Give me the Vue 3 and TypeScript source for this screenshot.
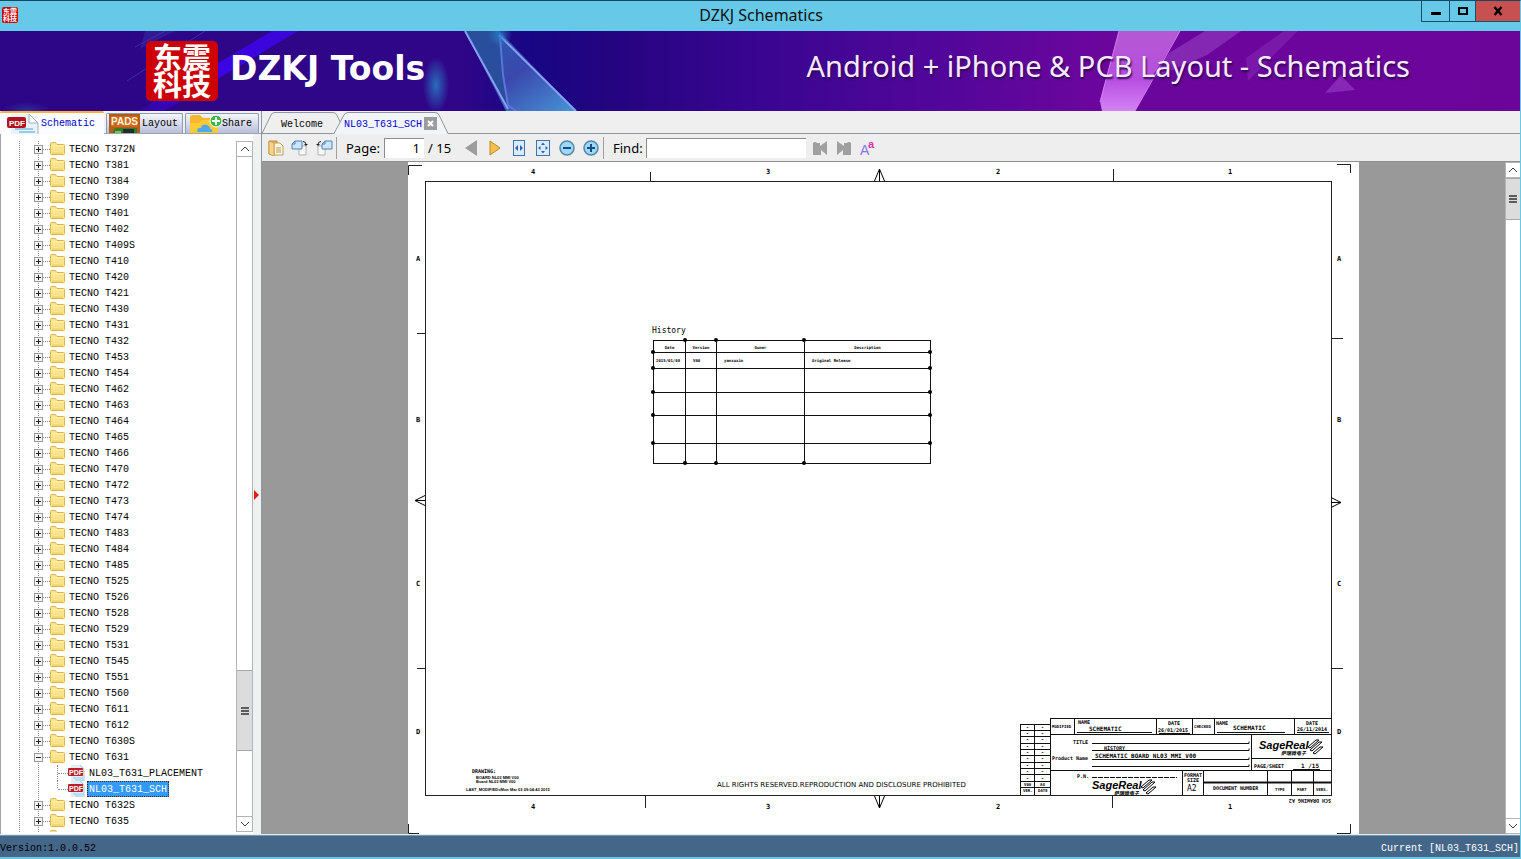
<script setup lang="ts">
import { ref } from 'vue'

const models: string[] = [
  'T372N', 'T381', 'T384', 'T390', 'T401', 'T402', 'T409S', 'T410', 'T420', 'T421', 'T430', 'T431', 'T432',
  'T453', 'T454', 'T462', 'T463', 'T464', 'T465', 'T466', 'T470', 'T472', 'T473', 'T474', 'T483', 'T484',
  'T485', 'T525', 'T526', 'T528', 'T529', 'T531', 'T545', 'T551', 'T560', 'T611', 'T612', 'T630S', 'T631',
  'T632S', 'T635',
]
const files: string[] = ['NL03_T631_PLACEMENT', 'NL03_T631_SCH']
const openModel = 'T631'
const selected = ref('NL03_T631_SCH')
const page = ref('1')
const find = ref('')

const columnMarks = [
  { t: '4', x: 123 }, { t: '3', x: 358 }, { t: '2', x: 588 }, { t: '1', x: 820 },
]
const rowMarks = [
  { t: 'A', y: 99 }, { t: 'B', y: 260 }, { t: 'C', y: 424 }, { t: 'D', y: 572 },
]
const revisionRows = [565, 571, 577, 584, 590, 596, 603, 609, 616]
const historyCols = [277, 308, 396]
const historyRows = [190, 206, 230, 253, 281]

interface Label { t: string; x: number; y: number; c: string }
const labels: Label[] = [
  { t: 'MODIFIED', x: 644, y: 566, c: 't4' },
  { t: 'NAME', x: 670, y: 562, c: 't5' },
  { t: 'SCHEMATIC', x: 681, y: 569, c: 't6' },
  { t: 'DATE', x: 760, y: 563, c: 't5' },
  { t: '26/01/2015', x: 750, y: 570, c: 't5' },
  { t: 'CHECKED', x: 786, y: 566, c: 't4' },
  { t: 'NAME', x: 808, y: 563, c: 't5' },
  { t: 'SCHEMATIC', x: 825, y: 568, c: 't6' },
  { t: 'DATE', x: 898, y: 563, c: 't5' },
  { t: '26/11/2014', x: 889, y: 569, c: 't5' },
  { t: 'TITLE', x: 665, y: 582, c: 't5' },
  { t: 'HISTORY', x: 696, y: 588, c: 't5' },
  { t: 'Product Name', x: 644, y: 598, c: 't5' },
  { t: 'SCHEMATIC BOARD NL03_MMI_V00', x: 687, y: 596, c: 't6' },
  { t: 'P.N.', x: 669, y: 616, c: 't5' },
  { t: 'FORMAT', x: 776, y: 615, c: 't5' },
  { t: 'SIZE', x: 779, y: 620, c: 't5' },
  { t: 'A2', x: 779, y: 629, c: 't8' },
  { t: 'DOCUMENT NUMBER', x: 805, y: 628, c: 't5' },
  { t: 'TYPE', x: 867, y: 629, c: 't4' },
  { t: 'PART', x: 889, y: 629, c: 't4' },
  { t: 'VERS.', x: 908, y: 629, c: 't4' },
  { t: 'PAGE/SHEET', x: 846, y: 606, c: 't5' },
  { t: '1 /15', x: 893, y: 606, c: 't6' },
  { t: 'V00', x: 616, y: 624, c: 't4' },
  { t: 'A4', x: 632, y: 624, c: 't4' },
  { t: 'VER.', x: 615, y: 630, c: 't4' },
  { t: 'DATE', x: 630, y: 630, c: 't4' },
]
</script>

<template>
  <div class="window">
    <header class="titlebar">
      <span class="seal small" aria-hidden="true"><span>东震科技</span></span>
      <h1>DZKJ Schematics</h1>
      <div class="winbtns">
        <button class="min" aria-label="Minimize"><svg width="12" height="12"><rect x="1" y="7" width="10" height="3" /></svg></button>
        <button class="max" aria-label="Maximize"><svg width="12" height="12"><rect x="2" y="3" width="8" height="6" fill="none" stroke="#000" stroke-width="2" /></svg></button>
        <button class="close" aria-label="Close"><svg width="12" height="12"><path d="M2.500 2l7 8M9.500 2l-7 8" stroke="#000" stroke-width="2.400" /></svg></button>
      </div>
    </header>

    <section class="banner">
      <svg class="art" viewBox="0 0 1520 80" preserveAspectRatio="none" aria-hidden="true">
        <defs>
          <linearGradient id="bg" x1="0" x2="1" y1="0" y2="0">
            <stop offset="0" stop-color="#2c0687" /><stop offset=".3" stop-color="#300688" />
            <stop offset=".35" stop-color="#170683" /><stop offset=".4" stop-color="#24047f" />
            <stop offset=".5" stop-color="#390591" /><stop offset=".62" stop-color="#52069a" />
            <stop offset=".72" stop-color="#6b069d" /><stop offset="1" stop-color="#6b059a" />
          </linearGradient>
          <linearGradient id="streak" x1="1" x2="0" y1="0" y2="1">
            <stop offset="0" stop-color="#3c05d8" /><stop offset=".6" stop-color="#3a04e8" /><stop offset="1" stop-color="#3206a0" />
          </linearGradient>
          <linearGradient id="shard" x1="0" x2="1" y1="0" y2="1">
            <stop offset="0" stop-color="#2c62b8" /><stop offset=".5" stop-color="#3a48ac" /><stop offset="1" stop-color="#4794d8" />
          </linearGradient>
          <linearGradient id="pink" x1="0" x2="0" y1="0" y2="1">
            <stop offset="0" stop-color="#b35ad2" /><stop offset=".6" stop-color="#b74de0" /><stop offset="1" stop-color="#d283f4" />
          </linearGradient>
          <radialGradient id="glow"><stop offset="0" stop-color="#287fc4" stop-opacity=".85" /><stop offset="1" stop-color="#287fc4" stop-opacity="0" /></radialGradient>
        </defs>
        <rect width="1520" height="80" fill="url(#bg)" />
        <path d="M272 0h26l-84 50-50 30h-26z" fill="url(#streak)" />
        <path d="M205 0l-78 50M165 0l-30 16" stroke="#554cc0" stroke-opacity=".5" />
        <path d="M145 0h30l-35 18z" fill="#3b36a4" opacity=".4" />
        <ellipse cx="436" cy="54" rx="13" ry="28" fill="url(#glow)" />
        <ellipse cx="26" cy="80" rx="24" ry="9" fill="url(#glow)" opacity=".4" />
        <path d="M465 0h34l77 80h-70z" fill="url(#shard)" />
        <path d="M465 0h34l3 30 5 45z" fill="#284e9c" />
        <path d="M465 0l43 78M499 4l77 76" stroke="#87a0f2" stroke-width="2" fill="none" />
        <path d="M500 6l3 38 5 30 8 6" stroke="#5d74dc" stroke-width="2" fill="none" />
        <circle cx="500" cy="4" r="12" fill="url(#glow)" />
        <path d="M1119 0h61l-14 24-31 56h-33l-2-10z" fill="url(#pink)" />
        <path d="M1169 22l36-22h36l-34 24-58 25z" fill="#8428b4" />
        <path d="M1248 50L1298 0h-14l-38 27z" fill="#8528b4" opacity=".55" />
        <path d="M1325 62l16-18 14 15z" fill="#8627b5" />
        <path d="M1119 0l-19 71M1180 0l-45 80" stroke="#d27af0" fill="none" />
      </svg>
      <span class="seal large"><span>东震科技</span></span>
      <strong class="brand">DZKJ Tools</strong>
      <span class="tagline">Android + iPhone &amp; PCB Layout - Schematics</span>
    </section>

    <main class="body">
      <aside class="side">
        <nav class="sidetabs">
          <button class="stab on">
            <svg width="32" height="20" viewBox="0 0 32 20">
              <path d="M4 0h19l8 8v12H4z" fill="#e8f2f8" /><path d="M22 0l9 9v11" fill="none" stroke="#9cb4c4" />
              <path d="M22 0l9 9h-9z" fill="#fff" stroke="#9cb4c4" /><path d="M8 14h18v2H8zM12 17h16v2H12z" fill="#9ccbe6" />
              <rect y="3" width="19" height="11" rx="2" fill="#b3121d" />
              <text x="2" y="12" fill="#fff" class="pdf">PDF</text>
            </svg>Schematic</button>
          <button class="stab">
            <svg width="31" height="20" viewBox="0 0 31 20">
              <rect width="31" height="20" fill="#b75d13" /><rect x="2" y="2" width="27" height="11" fill="#c9691e" />
              <path d="M3 20l3-6h22v6z" fill="#347a27" /><path d="M14 15h11v5H14z" fill="#242c2b" /><path d="M6 17h6v2H6z" fill="#7fc14b" />
              <text x="2" y="11" fill="#fff4d8" class="pads">PADS</text>
            </svg>Layout</button>
          <button class="stab">
            <svg width="32" height="20" viewBox="0 0 32 20">
              <path d="M0 4q0-3 3-3h7l3 3h12q3 0 3 3v13H0z" fill="#f6b62d" /><path d="M0 20V9h9l3-3h16v14z" fill="#ffca38" />
              <path d="M7 17q1-4 4-3 1-5 6-3 3 1 3 4 3 0 2 3H8z" fill="#4da9ec" />
              <circle cx="26" cy="7" r="6" fill="#42b649" stroke="#fff" /><path d="M26 3v8M22 7h8" stroke="#fff" stroke-width="2" />
            </svg>Share</button>
        </nav>
        <div class="treewrap">
          <div class="tree">
            <ul>
              <li v-for="m in models" :key="m">
                <div class="row">
                  <button class="exp" :aria-label="(m === openModel ? 'Collapse ' : 'Expand ') + m">
                    <svg width="9" height="9"><rect x=".5" y=".5" width="8" height="8" fill="#f4f4f4" stroke="#989898" /><path :d="m === openModel ? 'M2 4.5h5' : 'M2 4.5h5M4.5 2v5'" stroke="#202020" /></svg>
                  </button>
                  <i class="dots"></i>
                  <svg class="folder" width="15" height="13" viewBox="0 0 15 13"><path d="M.5 1.500q0-1 1-1h4l1.500 2h6.500q1 0 1 1v8q0 1-1 1h-12q-1 0-1-1z" fill="#fbe38a" stroke="#dfb54b" /><path d="M1 4h13" stroke="#fff4bd" /><path d="M2 11h11" stroke="#f2cc5c" /></svg>
                  <span class="name">TECNO {{ m }}</span>
                </div>
                <ul v-if="m === openModel" class="kids">
                  <li v-for="f in files" :key="f" class="row">
                    <i class="dots"></i>
                    <svg class="doc" width="17" height="16" viewBox="0 0 17 16"><path d="M3 0h10l3 3v13H3z" fill="#dceef8" /><path d="M12 0l4 4v12" fill="none" stroke="#a8c8dc" /><path d="M5 13h10M7 15h8" stroke="#9fcbe6" /><rect y="3" width="15" height="8" rx="1" fill="#bb1f2a" /><text x="1" y="10" fill="#fff" class="pdfs">PDF</text></svg>
                    <button class="file" :class="{ sel: f === selected }" @click="selected = f">{{ f }}</button>
                  </li>
                </ul>
              </li>
              <li aria-hidden="true">
                <div class="row stub">
                  <svg class="folder" width="15" height="13" viewBox="0 0 15 13"><path d="M.5 1.500q0-1 1-1h4l1.500 2h6.500q1 0 1 1v8q0 1-1 1h-12q-1 0-1-1z" fill="#fbe38a" stroke="#dfb54b" /></svg>
                </div>
              </li>
            </ul>
          </div>
          <div class="vscroll">
            <button aria-label="Scroll up"><svg width="10" height="6"><path d="M1 5l4-4 4 4" fill="none" stroke="#404040" /></svg></button>
            <div class="gap-a"></div>
            <div class="thumb"><i></i><i></i><i></i></div>
            <div class="gap-b"></div>
            <button aria-label="Scroll down"><svg width="10" height="6"><path d="M1 1l4 4 4-4" fill="none" stroke="#404040" /></svg></button>
          </div>
          <div class="splitter"><svg width="6" height="10"><path d="M0 0l5 5-5 5z" fill="#e02018" /></svg></div>
        </div>
      </aside>

      <section class="docs">
        <nav class="doctabs">
          <svg class="tabshape" width="190" height="23" aria-hidden="true">
            <path d="M0 22.500L9 4q1-2.500 4-2.500h58q3 0 4 3l4 8" fill="none" stroke="#8b98a4" />
            <path d="M72 23L82 4q1-2.500 4-2.500h87q3 0 4 2.500l9 19z" fill="#f2f4f6" />
            <path d="M72 22.500L82 4q1-2.500 4-2.500h87q3 0 4 2.500l9 18.500" fill="none" stroke="#8b98a4" />
          </svg>
          <button class="dtab">Welcome</button>
          <button class="dtab cur">NL03_T631_SCH</button>
          <button class="x" aria-label="Close tab"><svg width="13" height="13"><rect width="13" height="13" fill="#9c9c9c" /><path d="M4 4l5 5M9 4l-5 5" stroke="#fff" stroke-width="2" /></svg></button>
        </nav>
        <div class="toolbar">
          <button aria-label="Open"><svg width="16" height="16"><path d="M1 1h8v13H1z" fill="#e9bb5c" stroke="#c08d2e" /><path d="M6 3h6l3 3v9H6z" fill="#fff7dd" stroke="#b9a069" /><path d="M8 8h5M8 10h5M8 12h5" stroke="#b89a58" /><path d="M1 1l5 2v13l-5-2z" fill="#f6d48b" stroke="#d0a14a" /></svg></button>
          <button aria-label="Rotate right"><svg width="18" height="16"><path d="M8 6h7v9H8z" fill="#fafafa" stroke="#b0b0b0" /><path d="M4 1h7v8H1V4z" fill="#cfe6fa" stroke="#4b82b8" /><path d="M1 4h3V1" fill="none" stroke="#4b82b8" /><path d="M12 1.500q3 0 3 3" fill="none" stroke="#222" /><path d="M13 4h4l-2 2z" fill="#222" /></svg></button>
          <button aria-label="Rotate left"><svg width="18" height="16"><path d="M3 6h7v9H3z" fill="#fafafa" stroke="#b0b0b0" /><path d="M10 1h7v8H7V4z" fill="#cfe6fa" stroke="#4b82b8" /><path d="M7 4h3V1" fill="none" stroke="#4b82b8" /><path d="M6 1.500q-3 0-3 3" fill="none" stroke="#222" /><path d="M1 4h4L3 6z" fill="#222" /></svg></button>
          <i class="sep"></i>
          <label class="plabel" for="page">Page:</label>
          <input id="page" v-model="page" class="pagebox" type="text" />
          <span class="total">/ 15</span>
          <button aria-label="Previous page"><svg width="14" height="16"><path d="M13 0v16L1 8z" fill="#9d9d9d" /></svg></button>
          <button aria-label="Next page"><svg width="12" height="16"><path d="M1 1v14l10-7z" fill="#f4c14e" stroke="#b98a22" /></svg></button>
          <button aria-label="Fit width"><svg width="12" height="16"><rect x=".5" y=".5" width="11" height="15" fill="#dcebfb" stroke="#3f74b0" /><path d="M5 5v6L2 8zM7 5v6l3-3z" fill="#2a66b0" /></svg></button>
          <button aria-label="Fit page"><svg width="14" height="16"><rect x=".5" y=".5" width="13" height="15" fill="#dcebfb" stroke="#3f74b0" /><path d="M5 5h4L7 2.500zM5 11h4l-2 2.500zM4.500 6v4L2 8zM9.500 6v4L12 8z" fill="#2a66b0" /></svg></button>
          <button aria-label="Zoom out"><svg width="16" height="16"><circle cx="8" cy="8" r="7" fill="#9bd8fa" stroke="#5786a6" stroke-width="1.500" /><path d="M4 8h8" stroke="#164b84" stroke-width="2" /></svg></button>
          <button aria-label="Zoom in"><svg width="16" height="16"><circle cx="8" cy="8" r="7" fill="#9bd8fa" stroke="#5786a6" stroke-width="1.500" /><path d="M4 8h8M8 4v8" stroke="#164b84" stroke-width="2" /></svg></button>
          <i class="sep"></i>
          <label class="flabel" for="find">Find:</label>
          <input id="find" v-model="find" class="findbox" type="text" />
          <button aria-label="Find previous"><svg width="16" height="16"><path d="M1 3q2-2 4 0h3v3l7-5v14l-6-5v5H1z" fill="#a0a0a0" /></svg></button>
          <button aria-label="Find next"><svg width="16" height="16"><path d="M15 3q-2-2-4 0H8v3L1 1v14l6-5v5h8z" fill="#a0a0a0" /></svg></button>
          <button aria-label="Match case"><svg width="16" height="22"><text x="0" y="18" fill="#8a74ea" class="bigA">A</text><text x="8" y="11" fill="#d633a8" class="smallA">a</text></svg></button>
        </div>
        <div class="viewer">
          <div class="canvas">
            <svg class="sheet" viewBox="0 0 951 672">
              <rect width="951" height="672" fill="#fff" />
              <g fill="none" stroke="#222">
                <rect x="17.500" y="19.500" width="906" height="614" />
                <path d="M.5 13V3.500H14M929 2.500h13.500V11M.5 662v9.500H11M929 671.500h13.500V662" />
                <path d="M242.500 10v9M705.500 7v12M237.500 634v12M704.500 634v12M9 171.500h8M9 506.500h8M924 176.500h11M924 506.500h11" />
                <path d="M471.500 7v12M471.500 7l-5 12M471.500 7l5 12M471.500 646v-12M471.500 646l-5-12M471.500 646l5-12M7 338.500h10M7 338.500l10-5M7 338.500l10 5M933 340.500h-10M933 340.500l-10-5M933 340.500l-10 5" stroke="#000" />
              </g>
              <g class="mark">
                <template v-for="c in columnMarks" :key="c.t">
                  <text :x="c.x" y="12">{{ c.t }}</text><text :x="c.x" y="647">{{ c.t }}</text>
                </template>
                <template v-for="r in rowMarks" :key="r.t">
                  <text x="8" :y="r.y">{{ r.t }}</text><text x="929" :y="r.y">{{ r.t }}</text>
                </template>
              </g>

              <text x="244" y="171" class="t8">History</text>
              <foreignObject x="245" y="178" width="279" height="125">
                <table class="history">
                  <colgroup><col class="c1" /><col class="c2" /><col class="c3" /><col /></colgroup>
                  <thead><tr class="h12"><th>Date</th><th>Version</th><th>Owner</th><th>Description</th></tr></thead>
                  <tbody>
                    <tr class="h16"><td>2015/01/08</td><td class="in">V00</td><td class="in">yanxuxin</td><td class="in">Original Release</td></tr>
                    <tr class="h24"><td></td><td></td><td></td><td></td></tr>
                    <tr class="h23"><td></td><td></td><td></td><td></td></tr>
                    <tr class="h28"><td></td><td></td><td></td><td></td></tr>
                    <tr class="h20"><td></td><td></td><td></td><td></td></tr>
                  </tbody>
                </table>
              </foreignObject>
              <g>
                <template v-for="x in historyCols" :key="x"><circle :cx="x" cy="178" r="2" /><circle :cx="x" cy="301" r="2" /></template>
                <template v-for="y in historyRows" :key="y"><circle cx="245" :cy="y" r="2" /><circle cx="522" :cy="y" r="2" /></template>
              </g>

              <text x="64" y="611" class="t5">DRAWING:</text>
              <text x="68" y="617" class="s4">BOARD NL03 MMI V00</text>
              <text x="68" y="621" class="s4">Board NL03 MMI V00</text>
              <text x="58" y="629" class="s4">LAST_MODIFIED=Mon Mar 03 09:04:43 2015</text>
              <text x="309" y="625" class="rights">ALL RIGHTS RESERVED.REPRODUCTION AND DISCLOSURE PROHIBITED</text>

              <g fill="none" stroke="#111">
                <path d="M612.500 562.500h30M612.500 568.500h30M612.500 574.500h30M612.500 581.500h30M612.500 587.500h30M612.500 593.500h30M612.500 600.500h30M612.500 606.500h30M612.500 612.500h30M612.500 619.500h30M612.500 625.500h30" />
                <path d="M612.500 562v71M626.500 562v71M642.500 556v77M642.500 556.500h281M642.500 572.500h281M642.500 608.500h281" />
                <path d="M666.500 556v16M748.500 556v16M784.500 556v16M806.500 556v16M886.500 556v16M843.500 572v36M843.500 596.500h80" />
                <path d="M774.500 608v25M795.500 608v25M859.500 608v25M883.500 608v25M905.500 608v25" />
                <path d="M669 570.500h75M751 571.500h31M809 570.500h68M889 570.500h32M684 581.500h157v-2M684 588.500h157v-2M684 597.500h157v-2M684 604.500h157v-2M885 607.500h27" />
                <path d="M684 615.500h85" stroke-dasharray="5 1" />
                <path d="M795 620.500h128" stroke-width="2" />
              </g>
              <text v-for="(l, i) in labels" :key="i" :x="l.x" :y="l.y" :class="l.c">{{ l.t }}</text>
              <template v-for="y in revisionRows" :key="y"><text x="618" :y="y + 2" class="t5">-</text><text x="633" :y="y + 2" class="t5">-</text></template>
              <text x="923" y="637" class="t5" transform="rotate(180 923 637)">SCH DRAWING A2</text>
              <g v-for="(p, i) in [{ x: 851, y: 577 }, { x: 684, y: 617 }]" :key="'logo' + i" :transform="`translate(${p.x} ${p.y})`">
                <text x="0" y="10" class="sage">SageReal</text>
                <text x="22" y="16" class="sub">萨瑞微电子</text>
                <path d="M49 8l8-7h3l-9 8zM51 11l9-8h3L53 12zM54 14l7-6h3l-8 7z" fill="#fff" stroke="#000" />
              </g>
            </svg>
          </div>
          <div class="vscroll wide">
            <button aria-label="Page up"><svg width="10" height="6"><path d="M1 5l4-4 4 4" fill="none" stroke="#404040" /></svg></button>
            <div class="thumb"><i></i><i></i><i></i></div>
            <div class="gap-b"></div>
            <button aria-label="Page down"><svg width="10" height="6"><path d="M1 1l4 4 4-4" fill="none" stroke="#404040" /></svg></button>
          </div>
        </div>
      </section>
    </main>

    <footer class="status"><span>Version:1.0.0.52</span><span>Current [NL03_T631_SCH]</span></footer>
  </div>
</template>

<style>
body { margin: 0; }
</style>

<style scoped>
* { box-sizing: border-box; }
button { padding: 0; border: 0; background: none; font: inherit; color: inherit; display: flex; align-items: center; justify-content: center; }
svg { display: block; flex: none; }
ul { list-style: none; margin: 0; padding: 0; }
.window { height: 100vh; display: flex; flex-direction: column; background: #efefef; border-top: 1px solid #174760; border-right: 1px solid #66c9e8; border-bottom: 2px solid #6cc5e2; font: 10px/16px "Liberation Mono", monospace; color: #000; overflow: hidden; }
.titlebar { height: 30px; flex: none; background: #66c9e8; display: grid; grid-template-columns: 1fr auto 1fr; align-items: center; padding: 0 0 2px 2px; }
h1 { margin: 0; font: 400 16px/20px "Noto Sans", sans-serif; color: #111; }
.seal { display: flex; align-items: center; justify-content: center; background: #cc0005; color: #fff; font-family: "Noto Sans CJK SC", sans-serif; font-weight: 700; }
.seal span { width: 2em; word-break: break-all; }
.seal.small { width: 16px; height: 16px; border-radius: 2px; font-size: 7px; line-height: 7px; }
.seal.large { width: 72px; height: 60px; border-radius: 5px; font-size: 29px; line-height: 27px; margin-left: 146px; padding-bottom: 2px; position: relative; }
.winbtns { display: flex; justify-self: end; align-self: start; height: 21px; }
.winbtns button { border: 1px solid #17506b; border-top: 0; border-right: 0; }
.min { width: 28px; }
.max { width: 26px; }
.winbtns .close { width: 45px; background: #c75050; }
.banner { position: relative; height: 80px; flex: none; display: flex; align-items: center; color: #fff; }
.art { position: absolute; inset: 0; width: 100%; height: 100%; }
.brand { position: relative; margin-left: 12px; padding-bottom: 4px; font: 700 33px/40px "DejaVu Sans", sans-serif; white-space: nowrap; }
.tagline { position: relative; margin-left: auto; margin-right: 110px; padding-bottom: 10px; font: 400 29px/36px "Noto Sans", sans-serif; color: #f6eaff; text-shadow: 1px 2px 2px #300550; white-space: nowrap; }
.body { flex: 1; min-height: 0; display: flex; border-bottom: 1px solid #dfeaf4; }
.side { width: 262px; flex: none; display: flex; flex-direction: column; border-right: 1px solid #fff; }
.sidetabs { display: flex; align-items: flex-end; gap: 2px; height: 23px; flex: none; background: #f0f1f4; border-bottom: 1px solid #9ba4b0; }
.stab { height: 20px; width: 77px; gap: 2px; border: 1px solid #8d9bb0; border-bottom: 0; border-radius: 2px 2px 0 0; background: linear-gradient(#f5f6fb, #b9bfda); overflow: hidden; justify-content: flex-start; padding: 1px 0 0 2px; }
.stab:last-child { width: 74px; padding-left: 4px; gap: 0; }
.stab.on { width: 104px; height: 23px; margin-bottom: -1px; padding: 1px 0 0 7px; border: 0; border-top: 2px solid #ffb13b; background: #fbfcff; color: #0000c8; }
.treewrap { flex: 1; min-height: 0; display: flex; padding: 7px 0 2px; background: #fff; border-left: 1px solid #9ba4b0; }
.tree { flex: 1; overflow: hidden; background: #fff; margin-left: 18px; border-left: 1px dotted #909090; }
.row { height: 16px; display: flex; align-items: center; white-space: nowrap; }
.name { padding-top: 2px; }
.stub { height: 4px; align-items: flex-start; padding: 1px 0 0 16px; overflow: hidden; }
.tree > ul { padding-left: 14px; }
.tree > ul > li { background: repeating-linear-gradient(#909090 0 1px, transparent 1px 2px) 4px 0 / 1px 100% no-repeat; }
.exp { width: 9px; height: 9px; margin-top: 1px; }
.dots { width: 7px; margin-top: 1px; border-top: 1px dotted #909090; }
.folder { margin: 0 4px 1px 0; }
.kids { margin-left: 23px; }
.kids .row { border-left: 1px dotted #909090; }
.kids .row:last-child { border-left-color: transparent; background: repeating-linear-gradient(#909090 0 1px, transparent 1px 2px) -1px 0 / 1px 8px no-repeat; }
.kids .dots { width: 10px; }
.doc { margin-right: 2px; }
.file { height: 16px; padding: 1px 1px 0; border: 1px solid transparent; }
.file.sel { background: #3399ff; color: #fff; border: 1px dotted #3a2a10; }
.vscroll { width: 17px; flex: none; display: flex; flex-direction: column; background: #fff; border: 1px solid #b4b4b4; border-width: 0 1px; }
.vscroll button { height: 16px; flex: none; border: 1px solid #b4b4b4; border-width: 1px 0; }
.thumb { height: 81px; flex: none; display: flex; flex-direction: column; align-items: center; justify-content: center; gap: 1px; background: #dcdcdc; border: 1px solid #a8a8a8; border-width: 1px 0; }
.thumb i { width: 8px; height: 2px; background: #5c5c5c; }
.gap-a { flex: 514; }
.gap-b { flex: 65; }
.splitter { width: 8px; flex: none; margin: -7px 0 -2px; padding: 22px 0 0 1px; background: #f0f1f2; display: flex; align-items: center; }
.docs { flex: 1; min-width: 0; display: flex; flex-direction: column; border-left: 1px solid #8b98a4; margin-left: -1px; }
.doctabs { position: relative; height: 23px; flex: none; display: flex; align-items: center; border-bottom: 1px solid #8b98a4; }
.tabshape { position: absolute; left: 0; top: 0; }
.dtab { position: relative; height: 22px; margin-left: 19px; padding-top: 5px; }
.dtab.cur { color: #0000d8; margin-left: 21px; }
.x { position: relative; margin: 3px 0 0 2px; }
.toolbar { height: 28px; flex: none; display: flex; align-items: center; padding-left: 2px; background: #eeeeef; border-bottom: 1px solid #8f8f8f; font: 13px/18px "Noto Sans", sans-serif; }
.toolbar button { width: 24px; height: 22px; flex: none; }
.sep { width: 1px; height: 22px; flex: none; background: #a0a0a0; }
.plabel { width: 47px; flex: none; padding-left: 9px; }
.flabel { width: 42px; flex: none; padding-left: 9px; }
.toolbar input { height: 20px; flex: none; border: 0; border-left: 1px solid #8c8c8c; border-top: 1px solid #8c8c8c; background: #fff; font: inherit; padding: 0 4px; outline: 0; }
.toolbar .pagebox { width: 40px; text-align: right; }
.toolbar .findbox { width: 160px; margin-right: 2px; }
.total { width: 35px; flex: none; padding-left: 4px; }
.viewer { flex: 1; min-height: 0; display: flex; background: #999; }
.canvas { flex: 1; min-width: 0; display: flex; justify-content: center; }
.sheet { height: 100%; max-width: 100%; }
.vscroll.wide { width: 15px; border-right: 0; }
.wide .thumb { height: 42px; }
.wide .gap-b { flex: 1; }
.status { height: 22px; flex: none; display: flex; justify-content: space-between; align-items: center; padding: 5px 1px 0 0; background: #446688; border-top: 1px solid #7d95a8; }
.status span:last-child { color: #fff; }
.pdf, .pads, .pdfs { font-family: "Liberation Sans", sans-serif; font-weight: 700; font-size: 8px; }
.pads { font-size: 10px; }
.pdfs { font-size: 7px; }
.bigA { font: 14px "Liberation Sans", sans-serif; }
.smallA { font: 700 11px "Liberation Sans", sans-serif; }
.mark text { font: 700 7px "DejaVu Sans Mono", monospace; }
.t4, .t5, .t6, .t8 { font-family: "DejaVu Sans Mono", monospace; font-weight: 700; font-size: 4px; }
.t5 { font-size: 5px; }
.t6 { font-size: 6px; }
.t8 { font-size: 8px; font-weight: 400; }
.s4 { font: 700 4px "Liberation Sans", sans-serif; }
.rights { font: 7px "DejaVu Sans", sans-serif; }
.sage { font: italic 700 11px "Liberation Sans", sans-serif; }
.sub { font: italic 700 5px "Noto Sans CJK SC", sans-serif; }
.history { width: 278px; table-layout: fixed; border-collapse: collapse; font: 700 4px/6px "DejaVu Sans Mono", monospace; }
.history th, .history td { border: 1px solid #111; padding: 0 0 0 2px; text-align: left; white-space: nowrap; }
.history th { padding: 3px 0 0; text-align: center; }
.history td.in { padding-left: 7px; }
.c1 { width: 32px; }
.c2 { width: 31px; }
.c3 { width: 88px; }
.h12 { height: 12px; }
.h16 { height: 16px; }
.h20 { height: 20px; }
.h23 { height: 23px; }
.h24 { height: 24px; }
.h28 { height: 28px; }
</style>
